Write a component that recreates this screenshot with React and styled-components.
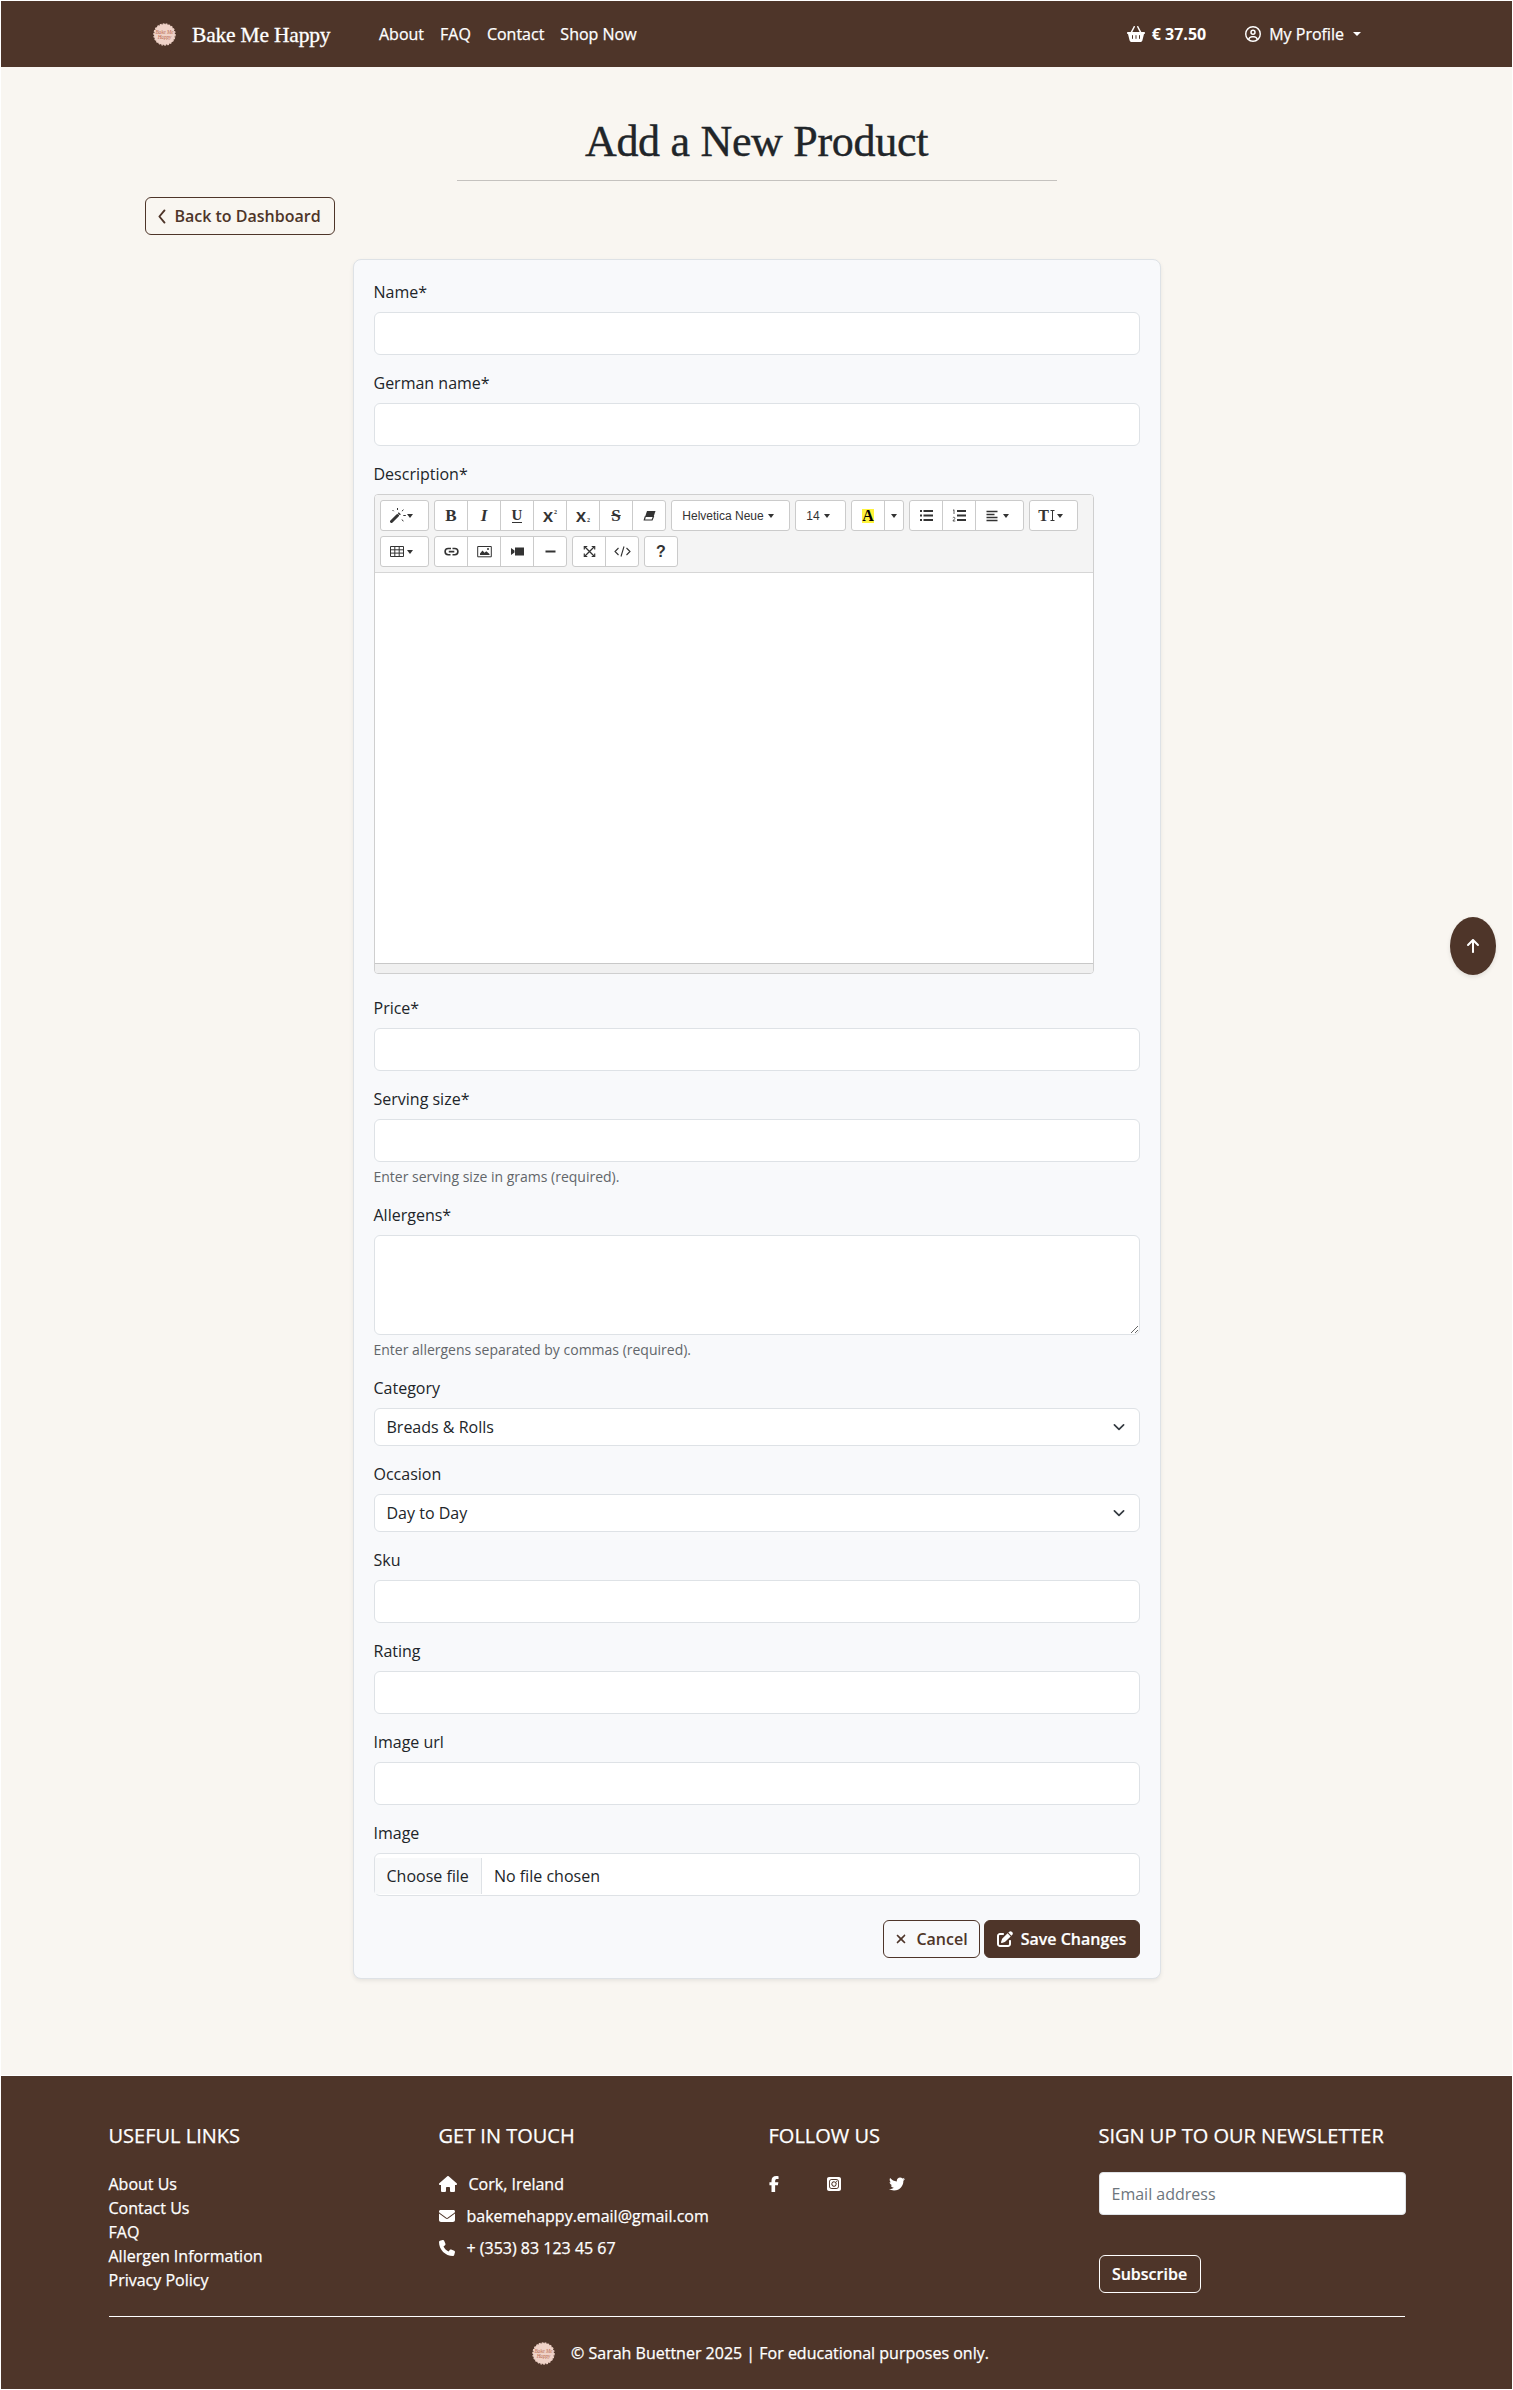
import React from "react";
import styled, { createGlobalStyle, css } from "styled-components";
import {
  FaBasketShopping, FaHouse, FaEnvelope, FaPhone, FaFacebookF, FaSquareInstagram,
  FaTwitter, FaArrowUp, FaXmark, FaPenToSquare, FaRegCircleUser,
} from "react-icons/fa6";

const brown = "#4e3529";

const GlobalStyle = createGlobalStyle`
  * { box-sizing: border-box; }
  body { margin: 0; background: #f9f6f1; color: #212529;
    font: 400 16px/1.5 "Open Sans", "Noto Sans", sans-serif; }
  button, input, textarea { font: inherit; color: inherit; letter-spacing: inherit; }
`;

const Page = styled.div`
  position: relative;
  width: 1513px;
  height: 2390px;
  border: 1px solid #fff;
  display: flex;
  flex-direction: column;
`;

/* ---------- Navigation ---------- */
const Nav = styled.nav`
  height: 66px;
  background: ${brown};
  color: #fff;
  display: flex;
  align-items: center;
  padding: 0 151px 0 152px;
  font-weight: 500;
  -webkit-text-stroke: 0.25px currentColor;
  flex: none;
`;
const Brand = styled.a`
  display: flex;
  align-items: center;
  gap: 16px;
  width: 226px;
  font: 400 21.5px/30px "Liberation Serif", serif;
  -webkit-text-stroke: 0.3px currentColor;
  white-space: nowrap;
`;
const BrandName = styled.span`letter-spacing: -0.2px; padding-top: 1px;`;
const NavLinks = styled.div`display: flex; gap: 16px; flex: 1;`;
const NavLink = styled.a`white-space: nowrap;`;
const Basket = styled.a`
  display: flex; align-items: center; gap: 7px; font-weight: 700; margin-right: 39px;
  white-space: nowrap; -webkit-text-stroke: 0;
`;
const Profile = styled.a`display: flex; align-items: center; gap: 8px; white-space: nowrap;`;
const Caret = styled.span`
  border: solid transparent;
  border-width: ${(p) => p.$s}px ${(p) => p.$s}px 0;
  border-top-width: ${(p) => p.$h || p.$s}px;
  border-top-color: currentColor;
  margin-left: ${(p) => p.$gap || 0}px;
`;

/* ---------- Heading ---------- */
const Header = styled.header`
  display: flex; flex-direction: column; align-items: center; padding-top: 49px; flex: none;
`;
const Title = styled.h1`
  margin: 0; font: 400 44px/52px "Liberation Serif", serif; letter-spacing: -0.3px; white-space: nowrap;
  -webkit-text-stroke: 0.4px currentColor;
`;
const Rule = styled.hr`
  width: 600px; height: 1px; border: 0; background: #c5c2bf; margin: 12px 0 16px;
`;
const BackRow = styled.div`padding-left: 144px; height: 38px; margin-bottom: 24px; flex: none;`;
const Button = styled.button`
  width: ${(p) => p.$w}px;
  height: 38px;
  border: 1px solid ${(p) => (p.$light ? "#fff" : brown)};
  border-radius: 6px;
  background: ${(p) => (p.$solid ? brown : "transparent")};
  color: ${(p) => (p.$solid || p.$light ? "#fff" : brown)};
  font-weight: 600;
  -webkit-text-stroke: ${(p) => (p.$solid || p.$light ? 0.2 : 0)}px currentColor;
  padding: 0 1px 0 0;
  display: flex; align-items: center; justify-content: center; gap: 8px;
  white-space: nowrap;
`;

/* ---------- Form ---------- */
const Card = styled.form`
  width: 808px; height: 1720px; margin-left: 352px; flex: none;
  padding: 20px;
  background: #f8f9fb;
  border: 1px solid #dee2e6;
  border-radius: 8px;
  box-shadow: 0 2px 4px rgba(0, 0, 0, 0.075);
`;
const Group = styled.div`margin-bottom: ${(p) => p.$mb ?? 16}px; display: flex; flex-direction: column;`;
const Label = styled.label`height: 24px; margin: 0 0 8px -0.5px;`;
const control = css`
  width: 100%; background: #fff; border: 1px solid #dee2e6; border-radius: 6px; outline: 0;
`;
const Input = styled.input`${control} height: 43px; padding: 0 12px; &::placeholder { color: #6c757d; opacity: 1; }`;
const NewsInput = styled(Input)`border-radius: 4px; font-weight: 400; padding: 0 11.5px;`;
const TextArea = styled.textarea`${control} height: 100px; resize: vertical; display: block;`;
const Select = styled.div`
  ${control} height: 38px; padding: 0 13px 0 11.5px; display: flex; align-items: center; justify-content: space-between;
  svg { color: #343a40; }
`;
const Help = styled.small`font-size: 14px; line-height: 21px; margin: 4px 0 0 -0.5px; color: #62666a;`;
const FileBox = styled.div`${control} height: 43px; padding-top: 4px; display: flex;`;
const FileButton = styled.span`
  width: 107px; height: 36px; line-height: 36px; padding-left: 11.5px; background: #f8f9fa;
  border-right: 1px solid #dee2e6; margin-right: 12px; white-space: nowrap;
`;
const FileText = styled.span`line-height: 36px;`;
const Actions = styled.div`display: flex; justify-content: flex-end; gap: 4px;`;

/* ---------- Rich text editor ---------- */
const Editor = styled.div`
  width: 720px; height: 480px; border: 1px solid #cfcfcf; border-radius: 4px; background: #fff;
  display: flex; flex-direction: column; overflow: hidden;
`;
const Toolbar = styled.div`
  height: 78px; background: #f4f4f4; border-bottom: 1px solid #d6d6d6; padding: 5px;
  display: flex; flex-direction: column; gap: 5px;
`;
const ToolRow = styled.div`display: flex; gap: 5px;`;
const ToolGroup = styled.div`
  display: flex; height: 31px; border: 1px solid #cbcbcb; border-radius: 3px; background: #fff; overflow: hidden;
`;
const Tool = styled.span`
  width: ${(p) => p.$w || 33}px;
  display: flex; align-items: center; justify-content: center; gap: ${(p) => p.$gap ?? 3}px;
  padding-right: ${(p) => p.$pr || 0}px;
  border-right: 1px solid #cbcbcb;
  color: #333;
  font: ${(p) => p.$font || '400 12px "Liberation Sans", sans-serif'};
  white-space: nowrap;
  &:last-child { border-right: 0; width: ${(p) => p.$w || 32}px; }
  svg { flex: none; }
`;
const Under = styled.span`border-bottom: 1px solid #333; line-height: 13px; font-size: 15px;`;
const Strike = styled.span`text-decoration: line-through;`;
const Mark = styled.span`background: #fff33b; color: #000; width: 12px; font-size: 16px; line-height: 14px; text-align: center;`;
const Small = styled.span`font: 700 6px/6px "Liberation Serif", serif; align-self: ${(p) => (p.$low ? "flex-end" : "flex-start")}; margin: 8px 0 7px -2px;`;
const Editable = styled.div`flex: 1;`;
const Status = styled.div`height: 10px; flex: none; background: #f0f0f0; border-top: 1px solid #c8c8c8;`;

/* ---------- Footer ---------- */
const Footer = styled.footer`
  margin-top: 96px; height: 314px; flex: none; border-top: 1px solid #fff;
  background: ${brown}; color: #fff; padding: 48px 107px 0 108px; font-weight: 500;
  -webkit-text-stroke: 0.25px currentColor;
  input { -webkit-text-stroke: 0; }
`;
const Columns = styled.div`
  display: grid; grid-template-columns: 330px 330px 330px 307px; height: 192px;
`;
const Heading = styled.h5`margin: 0 0 24px -0.5px; font-size: 20px; line-height: 24px; font-weight: 500; white-space: nowrap;`;
const Column = styled.div`min-width: 0;`;
const FootLink = styled.a`display: block; height: 24px; margin-left: -0.5px;`;
const Contact = styled.div`
  display: flex; align-items: center; gap: 12px; height: 24px; margin: 0 0 8px -0.5px; white-space: nowrap;
`;
const Social = styled.div`
  display: flex; align-items: center; height: 24px; margin-left: -3px;
  svg:nth-child(2) { margin: 0 47px 0 43.5px; }
`;
const Bottom = styled.div`
  border-top: 1px solid #fff; display: flex; justify-content: center; align-items: center; gap: 16px; height: 73px;
  padding-left: 7px; white-space: nowrap;
`;
const ToTop = styled.button`
  position: absolute; left: 1449px; top: 916px; width: 46px; height: 58px; border: 0; border-radius: 50%;
  background: ${brown}; color: #fff; display: flex; align-items: center; justify-content: center;
  box-shadow: 0 2px 4px rgba(0, 0, 0, 0.1); padding: 0;
`;

const Logo = () => (
  <svg width="23" height="23" viewBox="0 0 24 24">
    <circle cx="12" cy="12" r="11" fill="#efd2c7" />
    <circle cx="12" cy="12" r="11" fill="none" stroke="#efd2c7" strokeWidth="1.4" strokeDasharray="1.9 1.2" />
    <g fill="#b96a52" fontFamily="Liberation Serif, serif" fontStyle="italic" fontSize="5.4" textAnchor="middle">
      <text x="12" y="11.5">Bake Me</text>
      <text x="12" y="16.5">Happy</text>
    </g>
  </svg>
);

const Chevron = () => (
  <svg width="8" height="15" viewBox="0 0 8 15" fill="none" stroke="currentColor" strokeWidth="1.9" strokeLinecap="round" strokeLinejoin="round">
    <path d="M6.5 1.4 1.4 7.5l5.1 6.1" />
  </svg>
);
const SelectArrow = () => (
  <svg width="14" height="14" viewBox="0 0 14 14" fill="none" stroke="currentColor" strokeWidth="1.7" strokeLinecap="round" strokeLinejoin="round">
    <path d="m2.4 4.8 4.6 4.5 4.6-4.5" />
  </svg>
);

const glyphs = {
  magic: (<><path d="m1.5 13.5 6-6" strokeWidth="3" strokeLinecap="round" /><path d="m8.8 6.2 1-1" strokeWidth="3" /><path d="M7.5 0v2M2.5 2l1.2 1.2M13.5 1.7l-1.6 1.5M13.3 7.5h2.5M12 11.5l1.3 1.8" strokeWidth="1" /></>),
  eraser: (<><path d="M5 3h8.5l-2 6H3z" fill="currentColor" stroke="none" /><path d="m3.3 8.5-1 3.5h7.8l1.6-4" strokeWidth="1.2" /></>),
  ul: (<><path d="M4.5 3H14M4.5 7.5H14M4.5 12H14" strokeWidth="2.2" /><path d="M1 3h2M1 7.5h2M1 12h2" strokeWidth="2" /></>),
  ol: (<><path d="M5 3h9M5 7.5h9M5 12h9" strokeWidth="2.2" /><path d="m1 2.5 1-.8V6M.8 9.8c1-1.2 2.7-.2 1.9.9L.9 13h2.4" strokeWidth=".8" /></>),
  align: <path d="M.5 3.5h11M.5 6.5h8M.5 9.5h11M.5 12.5h11" strokeWidth="1.5" />,
  table: <path d="M.5 2.5h13v10H.5zM.5 5.8h13M.5 9.1h13M4.8 2.5v10M9.2 2.5v10" strokeWidth="1" />,
  link: <path d="M7 4.5H4.2a3.1 3.1 0 0 0 0 6.2H6.5M8.5 4.5h2.3a3.1 3.1 0 0 1 0 6.2H8.5M4.8 7.6h5.5" strokeWidth="1.6" />,
  image: (<><path d="M.7 2.5h13.6v10.3H.7z" strokeWidth="1" /><path d="M3 11V9.5l2.5-3 2 2.2 1.8-1.5L12.5 10v1z" fill="currentColor" stroke="none" /><circle cx="11" cy="5" r="1" fill="currentColor" stroke="none" /></>),
  video: <path d="M5 3.5h9v8H5zM1 4l3.5 2.5v2L1 11z" fill="currentColor" stroke="none" />,
  minus: <path d="M2.5 7.5h10" strokeWidth="2" />,
  full: (<><path d="m3 3 9 9M12 3l-9 9" strokeWidth="1.3" /><path d="M2.3 5.5V2.5H5.3M9.7 2.5h3v3M2.3 9.5v3h3M9.7 12.5h3v-3" strokeWidth="1.2" /></>),
  code: <path d="M4.5 4 1 7.5 4.5 11M12.5 4 16 7.5 12.5 11M10 2.5l-3 10" strokeWidth="1.1" />,
  ibeam: <path d="M.5 2.5h4M.5 12.5h4M2.5 2.5v10" strokeWidth="1" />,
};
const Glyph = ({ name, w = 15 }) => (
  <svg width={w} height="15" viewBox={`0 0 ${w} 15`} fill="none" stroke="currentColor">{glyphs[name]}</svg>
);

const serif = '700 17px "Liberation Serif", serif';
const bold = '700 15px "Open Sans", sans-serif';

function RichText() {
  return (
    <Editor>
      <Toolbar>
        <ToolRow>
          <ToolGroup><Tool $w={47} $pr={6} $gap={1}><Glyph name="magic" w={16} /><Caret $s={3} $h={4} /></Tool></ToolGroup>
          <ToolGroup>
            <Tool $font={serif}>B</Tool>
            <Tool $font={'italic 700 17px "Liberation Serif", serif'}>I</Tool>
            <Tool $font={serif}><Under>U</Under></Tool>
            <Tool $font={bold}>X<Small>2</Small></Tool>
            <Tool $font={bold}>X<Small $low>2</Small></Tool>
            <Tool $font={serif}><Strike>S</Strike></Tool>
            <Tool><Glyph name="eraser" /></Tool>
          </ToolGroup>
          <ToolGroup><Tool $w={117} $pr={5} $font={'400 12px/1 "Liberation Sans", sans-serif'}>Helvetica Neue<Caret $s={3} $h={4} $gap={1} /></Tool></ToolGroup>
          <ToolGroup><Tool $w={49} $pr={5}>14<Caret $s={3} $h={4} $gap={1} /></Tool></ToolGroup>
          <ToolGroup>
            <Tool $font={serif}><Mark>A</Mark></Tool>
            <Tool $w={18}><Caret $s={3} $h={4} /></Tool>
          </ToolGroup>
          <ToolGroup>
            <Tool><Glyph name="ul" /></Tool>
            <Tool><Glyph name="ol" /></Tool>
            <Tool $w={47} $pr={5} $gap={5}><Glyph name="align" w={12} /><Caret $s={3} $h={4} /></Tool>
          </ToolGroup>
          <ToolGroup><Tool $w={47} $pr={6} $gap={1} $font={'700 16px "Liberation Serif", serif'}>T<Glyph name="ibeam" w={5} /><Caret $s={3} $h={4} $gap={1} /></Tool></ToolGroup>
        </ToolRow>
        <ToolRow>
          <ToolGroup><Tool $w={47} $pr={6}><Glyph name="table" w={14} /><Caret $s={3} $h={4} /></Tool></ToolGroup>
          <ToolGroup>
            <Tool><Glyph name="link" /></Tool>
            <Tool><Glyph name="image" /></Tool>
            <Tool><Glyph name="video" /></Tool>
            <Tool><Glyph name="minus" /></Tool>
          </ToolGroup>
          <ToolGroup>
            <Tool><Glyph name="full" /></Tool>
            <Tool><Glyph name="code" w={17} /></Tool>
          </ToolGroup>
          <ToolGroup><Tool $font={'700 16px "Liberation Sans", sans-serif'}>?</Tool></ToolGroup>
        </ToolRow>
      </Toolbar>
      <Editable />
      <Status />
    </Editor>
  );
}

const Field = ({ label, help, mb, children }) => (
  <Group $mb={mb}>
    <Label>{label}</Label>
    {children || <Input />}
    {help && <Help>{help}</Help>}
  </Group>
);

export default function App() {
  return (
    <Page>
      <GlobalStyle />
      <Nav>
        <Brand><Logo /><BrandName>Bake Me Happy</BrandName></Brand>
        <NavLinks>
          {["About", "FAQ", "Contact", "Shop Now"].map((t) => <NavLink key={t}>{t}</NavLink>)}
        </NavLinks>
        <Basket><FaBasketShopping size={18} />€ 37.50</Basket>
        <Profile><FaRegCircleUser size={16} />My Profile<Caret $s={4} $gap={1} /></Profile>
      </Nav>
      <Header>
        <Title>Add a New Product</Title>
        <Rule />
      </Header>
      <BackRow><Button $w={190}><Chevron />Back to Dashboard</Button></BackRow>
      <Card>
        <Field label="Name*" />
        <Field label="German name*" />
        <Field label="Description*" mb={22}><RichText /></Field>
        <Field label="Price*" />
        <Field label="Serving size*" help="Enter serving size in grams (required)." />
        <Field label="Allergens*" help="Enter allergens separated by commas (required)."><TextArea /></Field>
        <Field label="Category"><Select>Breads &amp; Rolls<SelectArrow /></Select></Field>
        <Field label="Occasion"><Select>Day to Day<SelectArrow /></Select></Field>
        <Field label="Sku" />
        <Field label="Rating" />
        <Field label="Image url" />
        <Field label="Image" mb={24}>
          <FileBox><FileButton>Choose file</FileButton><FileText>No file chosen</FileText></FileBox>
        </Field>
        <Actions>
          <Button type="button" $w={97}><FaXmark size={14} />Cancel</Button>
          <Button type="button" $w={156} $solid><FaPenToSquare size={16} />Save Changes</Button>
        </Actions>
      </Card>
      <Footer>
        <Columns>
          <Column>
            <Heading>USEFUL LINKS</Heading>
            {["About Us", "Contact Us", "FAQ", "Allergen Information", "Privacy Policy"].map((t) => <FootLink key={t}>{t}</FootLink>)}
          </Column>
          <Column>
            <Heading>GET IN TOUCH</Heading>
            <Contact><FaHouse size={18} />Cork, Ireland</Contact>
            <Contact><FaEnvelope size={16} />bakemehappy.email@gmail.com</Contact>
            <Contact><FaPhone size={16} />+ (353) 83 123 45 67</Contact>
          </Column>
          <Column>
            <Heading>FOLLOW US</Heading>
            <Social><FaFacebookF size={16} /><FaSquareInstagram size={16} /><FaTwitter size={16} /></Social>
          </Column>
          <Column>
            <Heading>SIGN UP TO OUR NEWSLETTER</Heading>
            <NewsInput placeholder="Email address" />
            <Group $mb={40} />
            <Button $w={102} $light>Subscribe</Button>
          </Column>
        </Columns>
        <Bottom><Logo />© Sarah Buettner 2025 | For educational purposes only.</Bottom>
      </Footer>
      <ToTop><FaArrowUp size={16} /></ToTop>
    </Page>
  );
}
